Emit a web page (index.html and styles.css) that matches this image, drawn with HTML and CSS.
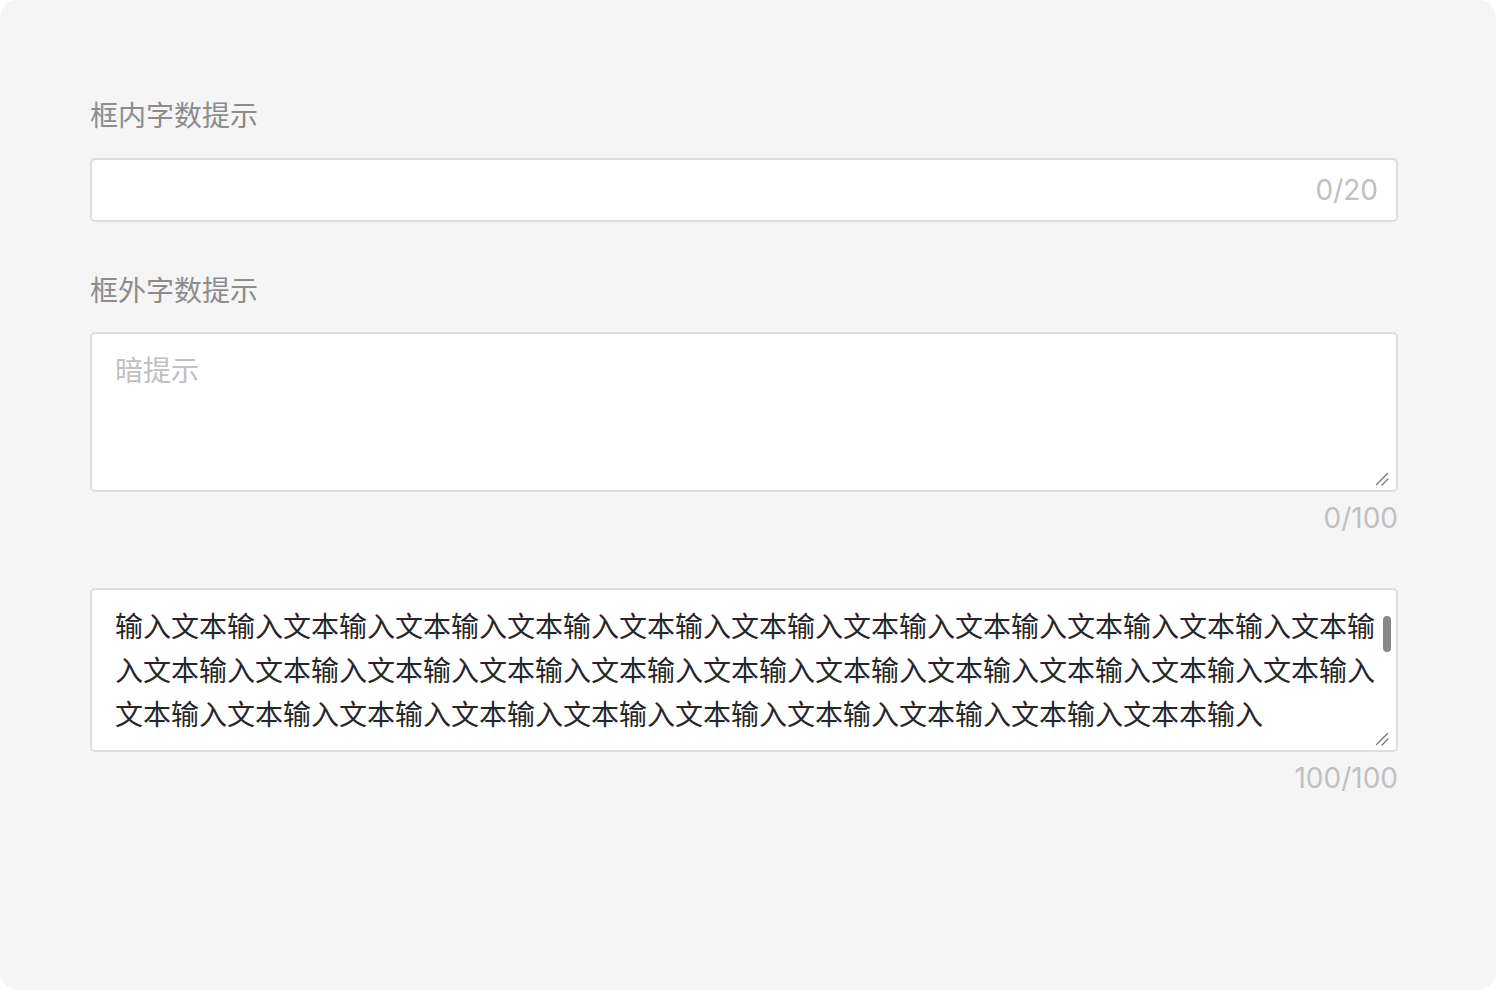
FILE: index.html
```html
<!DOCTYPE html>
<html lang="zh-CN">
<head>
<meta charset="utf-8">
<title>字数提示</title>
<link rel="stylesheet" href="styles.css">
</head>
<body>
<div class="panel">
  <div class="label">框内字数提示</div>
  <div class="input">
    <span class="count-inline">0/20</span>
  </div>

  <div class="label label-second">框外字数提示</div>
  <div class="textarea textarea-empty">
    <div class="placeholder">暗提示</div>
    <svg class="resize" width="14" height="14" viewBox="0 0 14 14"><path d="M1.5 12.5 L12.5 1.5 M7 13 L13 7" stroke="#7a7a7a" stroke-width="1.4" stroke-linecap="round" fill="none"/></svg>
  </div>
  <div class="count-below">0/100</div>

  <div class="textarea textarea-filled">
    <div class="line">输入文本输入文本输入文本输入文本输入文本输入文本输入文本输入文本输入文本输入文本输入文本输</div>
    <div class="line">入文本输入文本输入文本输入文本输入文本输入文本输入文本输入文本输入文本输入文本输入文本输入</div>
    <div class="line">文本输入文本输入文本输入文本输入文本输入文本输入文本输入文本输入文本输入文本本输入</div>
    <div class="thumb"></div>
    <svg class="resize" width="14" height="14" viewBox="0 0 14 14"><path d="M1.5 12.5 L12.5 1.5 M7 13 L13 7" stroke="#7a7a7a" stroke-width="1.4" stroke-linecap="round" fill="none"/></svg>
  </div>
  <div class="count-below">100/100</div>
</div>
</body>
</html>
```
FILE: styles.css
```css
html, body {
  margin: 0;
  padding: 0;
  background: #ffffff;
}

body {
  font-family: "Inter", "Noto Sans CJK SC", sans-serif;
}

.panel {
  box-sizing: border-box;
  width: 1496px;
  height: 990px;
  background: #f5f5f5;
  border-radius: 18px;
  padding: 94px 98px 0 90px;
  display: flex;
  flex-direction: column;
}

.label {
  font-family: "Noto Sans CJK SC", sans-serif;
  font-size: 28px;
  line-height: 40px;
  height: 40px;
  color: #8c8c8c;
}

.label-second {
  margin-top: 47px;
}

.input {
  margin-top: 24px;
  box-sizing: border-box;
  height: 64px;
  background: #ffffff;
  border: 2px solid #dddddd;
  border-radius: 5px;
  display: flex;
  align-items: center;
  justify-content: flex-end;
  padding: 0 18px 0 22px;
}

.count-inline {
  font-size: 28px;
  line-height: 40px;
  color: #c0c0c0;
}

.textarea {
  position: relative;
  margin-top: 23px;
  box-sizing: border-box;
  background: #ffffff;
  border: 2px solid #dddddd;
  border-radius: 5px;
  padding: 13px 22px 15px 23px;
  font-family: "Noto Sans CJK SC", sans-serif;
  font-size: 28px;
  line-height: 44px;
}

.textarea-empty {
  height: 160px;
}

.textarea-filled {
  height: 164px;
  margin-top: 50px;
  color: #262626;
}

.placeholder {
  color: #c0c0c0;
}

.line {
  white-space: nowrap;
  height: 44px;
}

.count-below {
  margin-top: 6px;
  align-self: flex-end;
  font-size: 28px;
  line-height: 40px;
  color: #c0c0c0;
}

.resize {
  position: absolute;
  right: 7px;
  bottom: 4px;
}

.thumb {
  position: absolute;
  right: 5px;
  top: 26px;
  width: 8px;
  height: 36px;
  border-radius: 4px;
  background: #888888;
}
```
